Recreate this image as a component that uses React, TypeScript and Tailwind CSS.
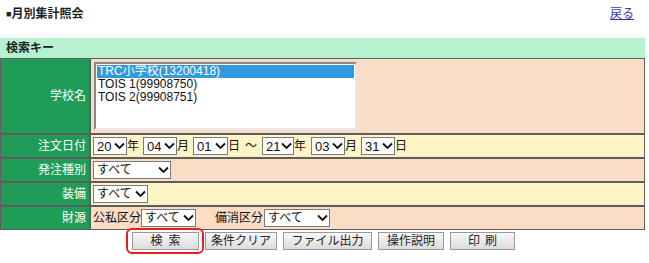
import React from "react";

const Chevron = () => (
  <svg width="11" height="8" viewBox="0 0 11 8" className="shrink-0">
    <path d="M1 1.5 L5.5 6 L10 1.5" fill="none" stroke="#111" strokeWidth="1.8" />
  </svg>
);

const Sel = ({ value, w, num }: { value: string; w: string; num?: boolean }) => (
  <div
    className={`${w} h-[18px] bg-white border border-[#7a7a7a] flex items-center justify-between pl-[3px] pr-[1px] leading-none text-[#111]`}
  >
    <span className={num ? "text-[13px]" : "text-[12px]"}>{value}</span>
    <Chevron />
  </div>
);

const Label = ({ children }: { children: React.ReactNode }) => (
  <div className="bg-[#1f9d56] text-white text-[12px] flex items-center justify-end pr-[3px]">
    {children}
  </div>
);

const Btn = ({ children, w }: { children: React.ReactNode; w: string }) => (
  <div
    className={`${w} h-[18px] border border-[#9a9a9a] bg-gradient-to-b from-[#f8f8f8] to-[#dcdcdc] flex items-center justify-center text-[12px] text-[#222] leading-none`}
  >
    {children}
  </div>
);

export default function App() {
  return (
    <div className="w-[649px] h-[263px] bg-white relative overflow-hidden font-['Liberation_Sans','Noto_Sans_CJK_JP',sans-serif] text-[12px]">
      <div className="h-[38px] flex justify-between items-start pt-[5px] pl-[6px] pr-[15px]">
        <div className="font-bold text-[12px] text-[#222]">
          <span className="text-[9px] align-[1px]">■</span>月別集計照会
        </div>
        <a className="text-[#3333aa] underline text-[12px]">戻る</a>
      </div>
      <div className="w-[645px] h-[20px] bg-[#b7f2d0] flex items-center pl-[6px] font-bold text-[#222]">
        検索キー
      </div>
      <div className="w-[645px] grid grid-cols-[88px_1fr] grid-rows-[74px_22px_22px_22px_22px] gap-x-[2px] gap-y-[2px] p-[1px] bg-[#5e5e5e]">
        <Label>学校名</Label>
        <div className="bg-[#fbdcc5] pl-[3px] pt-[3px]">
          <div className="w-[263px] h-[68px] bg-white border-2 border-t-[#8a8a8a] border-l-[#8a8a8a] border-r-[#e8e8e8] border-b-[#e8e8e8] pt-[1px] px-[1px] text-[12px] leading-[13px] text-[#111]">
            <div className="bg-[#3399dd] text-white pl-[1px]">TRC小学校(13200418)</div>
            <div className="pl-[1px]">TOIS 1(99908750)</div>
            <div className="pl-[1px]">TOIS 2(99908751)</div>
          </div>
        </div>

        <Label>注文日付</Label>
        <div className="bg-[#fff4c6] flex items-center pl-[2px] text-[#111]">
          <Sel value="20" w="w-[34px]" num />
          <span className="mr-[4px]">年</span>
          <Sel value="04" w="w-[34px]" num />
          <span className="mr-[4px]">月</span>
          <Sel value="01" w="w-[35px]" num />
          <span>日</span>
          <span className="ml-[5px] mr-[5px]">～</span>
          <Sel value="21" w="w-[32px]" num />
          <span className="mr-[5px]">年</span>
          <Sel value="03" w="w-[34px]" num />
          <span className="mr-[4px]">月</span>
          <Sel value="31" w="w-[34px]" num />
          <span>日</span>
        </div>

        <Label>発注種別</Label>
        <div className="bg-[#fbdcc5] flex items-center pl-[2px]">
          <Sel value="すべて" w="w-[78px]" />
        </div>

        <Label>装備</Label>
        <div className="bg-[#fff4c6] flex items-center pl-[2px]">
          <Sel value="すべて" w="w-[55px]" />
        </div>

        <Label>財源</Label>
        <div className="bg-[#fbdcc5] flex items-center pl-[2px] text-[#111]">
          <span>公私区分</span>
          <Sel value="すべて" w="w-[55px]" />
          <span className="ml-[19px] mr-[1px]">備消区分</span>
          <Sel value="すべて" w="w-[66px]" />
        </div>
      </div>
      <div className="w-[645px] flex justify-center gap-[6px] mt-[2px] pl-[2px]">
        <div className="relative">
          <Btn w="w-[67px]">
            <span className="tracking-[6px] pl-[6px]">検索</span>
          </Btn>
          <span className="absolute -left-[6px] -right-[5px] -top-[4px] -bottom-[4px] border-2 border-[#e52020] rounded-[6px]" />
        </div>
        <Btn w="w-[72px]">条件クリア</Btn>
        <Btn w="w-[89px]">ファイル出力</Btn>
        <Btn w="w-[66px]">操作説明</Btn>
        <Btn w="w-[65px]">
          <span className="tracking-[5px] pl-[5px]">印刷</span>
        </Btn>
      </div>
    </div>
  );
}
